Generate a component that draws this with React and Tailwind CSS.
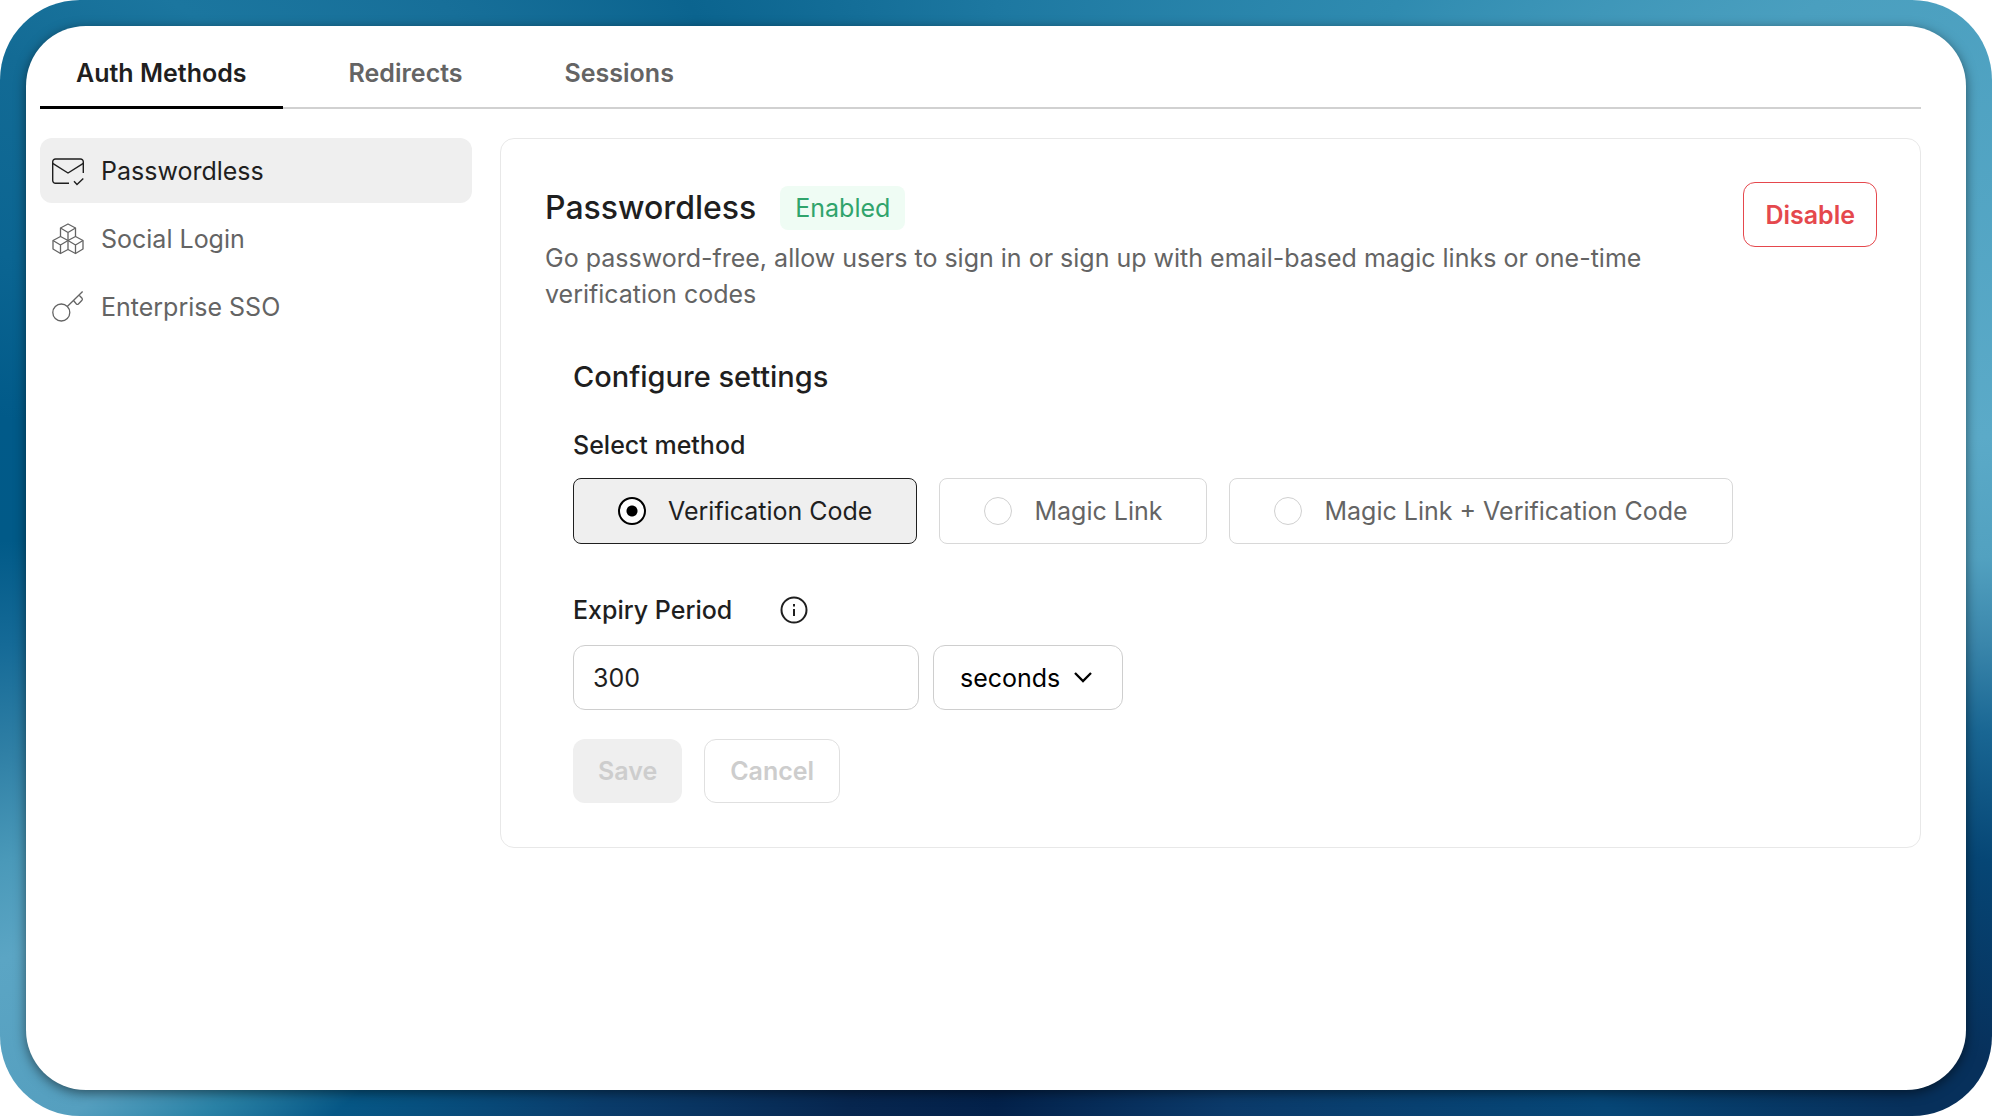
import { useState } from 'react'

const TABS = ['Auth Methods', 'Redirects', 'Sessions']
const METHODS = ['Verification Code', 'Magic Link', 'Magic Link + Verification Code']

function MailCheckIcon() {
  return (
    <svg className="size-8 shrink-0" viewBox="0 0 32 32" fill="none" stroke="currentColor" strokeWidth="1.4">
      <path d="M17 28.3H3.5a2.8 2.8 0 0 1-2.8-2.8V6.8A2.8 2.8 0 0 1 3.5 4h25a2.8 2.8 0 0 1 2.8 2.8V18" />
      <path d="M.7 8.3L16 18l15.3-9.7M22 26.2l3 3.3 6.3-6" />
    </svg>
  )
}

function CubesIcon() {
  return (
    <svg className="size-8 shrink-0" viewBox="0 0 32 32" fill="none" stroke="currentColor" strokeWidth="1.3" strokeLinejoin="round">
      <path d="M16 1l7.5 4v8.5L16 17.5l-7.5-4V5z" />
      <path d="M8.5 5L16 9.5 23.5 5M16 9.5v8" />
      <path d="M8.5 13.5L1 17.5V26l7.5 4.5 7.5-4v-9" />
      <path d="M1 17.5L8.5 22l7.5-4.5M8.5 22v8.5" />
      <path d="M23.5 13.5l7.5 4V26l-7.5 4.5-7.5-4" />
      <path d="M16 17.5l7.5 4.5 7.5-4.5M23.5 22v8.5" />
    </svg>
  )
}

function KeyIcon() {
  return (
    <svg className="size-8 shrink-0" viewBox="0 0 32 32" fill="none" stroke="currentColor" strokeWidth="1.3">
      <circle cx="9.3" cy="21.5" r="8.5" />
      <path d="M15.3 15.5L30.6.5M27 4l3 3.2q.8 1 0 2L26.400 13q-1 .8-2 0l-2.900-3.500" />
    </svg>
  )
}

const NAV = [
  { label: 'Passwordless', Icon: MailCheckIcon },
  { label: 'Social Login', Icon: CubesIcon },
  { label: 'Enterprise SSO', Icon: KeyIcon },
]

export default function App() {
  const [tab, setTab] = useState('Auth Methods')
  const [section, setSection] = useState('Passwordless')
  const [method, setMethod] = useState('Verification Code')
  const [expiry, setExpiry] = useState('300')
  const [unit, setUnit] = useState('seconds')

  return (
    <div className="flex min-h-screen bg-white font-['Inter',sans-serif] text-[25px] leading-9 text-[#1f1f1f]">
      <div className="flex flex-1 rounded-[80px] bg-[conic-gradient(#1d78a1,#2f8bb0_36deg,#4a9fbf_56deg,#5baac8_83deg,#52a1c0_90deg,#3a86ab_95deg,#196693_100deg,#064675_107deg,#07305b_117deg,#07305b_121deg,#064676_132deg,#0b3a6a_157deg,#03214a_180deg,#07264f_195deg,#0a3c6b_216deg,#065786_230deg,#2a82a6_235deg,#559fbf_239deg,#5ba5c4_248deg,#4a99b9_253deg,#2f7fa5_259deg,#156a97_265deg,#015a88_271deg,#015a89_278deg,#0b6592_287deg,#136b95_297deg,#1b769f_304deg,#176f99_315deg,#0b648f_331deg,#1d78a1)] p-[26px]">
        <div className="min-w-0 flex-1 rounded-[60px] bg-white pt-[29px] pr-[45px] pb-10 pl-[14px] shadow-[0_3px_12px_rgba(0,0,0,0.5)]">
          <nav className="flex gap-[30px] shadow-[inset_0_-2px_0_#d1d1d1]">
            {TABS.map((t) => (
              <button
                key={t}
                onClick={() => setTab(t)}
                className={`border-b-3 px-9 pb-[15px] font-semibold ${
                  tab === t ? 'border-black text-[#1f1f1f]' : 'border-transparent text-[#646464]'
                }`}
              >
                {t}
              </button>
            ))}
          </nav>

          <div className="mt-[29px] flex items-start gap-7">
            <aside className="flex w-[432px] shrink-0 flex-col gap-[3px]">
              {NAV.map(({ label, Icon }) => (
                <button
                  key={label}
                  onClick={() => setSection(label)}
                  className={`flex h-[65px] items-center gap-[17px] rounded-xl px-3 ${
                    section === label ? 'bg-[#efefef] text-[#1f1f1f]' : 'text-[#646464]'
                  }`}
                >
                  <Icon />
                  {label}
                </button>
              ))}
            </aside>

            <main className="min-w-0 flex-1 rounded-[14px] border border-[#e8e8e8] pt-[43px] pr-[43px] pb-11 pl-11">
              <div className="flex items-start justify-between gap-20">
                <div>
                  <div className="flex items-center gap-6 pt-1">
                    <h1 className="text-[32px] font-medium">Passwordless</h1>
                    <span className="rounded-lg bg-[#effcf4] px-[15px] py-1 text-[#30a46c]">Enabled</span>
                  </div>
                  <p className="mt-2.5 text-[#646464]">
                    Go password-free, allow users to sign in or sign up with email-based magic links or one-time verification codes
                  </p>
                </div>
                <button className="h-[65px] shrink-0 rounded-xl border border-[#e5484d] px-[21px] font-semibold text-[#e5484d]">
                  Disable
                </button>
              </div>

              <div className="mt-[47px] px-7">
                <h2 className="text-[29px] font-medium">Configure settings</h2>

                <fieldset className="mt-8">
                  <legend className="font-medium">Select method</legend>
                  <div className="mt-[15px] flex flex-wrap gap-[22px]">
                    {METHODS.map((m) => (
                      <label
                        key={m}
                        className={`flex h-[66px] items-center gap-[22px] rounded-lg border px-11 ${
                          method === m ? 'border-[#1f1f1f] bg-[#efefef]' : 'border-[#d8d8d8] text-[#646464]'
                        }`}
                      >
                        <input
                          type="radio"
                          name="method"
                          checked={method === m}
                          onChange={() => setMethod(m)}
                          className="size-7 appearance-none rounded-full border border-[#d0d0d0] bg-white checked:border-2 checked:border-black checked:bg-[radial-gradient(circle,#000_5px,#fff_6px)]"
                        />
                        {m}
                      </label>
                    ))}
                  </div>
                </fieldset>

                <div className="mt-12 flex items-center gap-12">
                  <label htmlFor="expiry" className="font-medium">Expiry Period</label>
                  <svg className="size-7" viewBox="0 0 28 28" fill="none" stroke="currentColor" strokeWidth="2">
                    <circle cx="14" cy="14" r="12.5" />
                    <path d="M14 13v7M14 8v2.5" />
                  </svg>
                </div>
                <div className="mt-[17px] flex gap-[14px]">
                  <input
                    id="expiry"
                    value={expiry}
                    onChange={(e) => setExpiry(e.target.value)}
                    className="h-[65px] w-[346px] rounded-xl border border-[#cecece] px-[19px]"
                  />
                  <div className="relative">
                    <select
                      aria-label="Expiry unit"
                      value={unit}
                      onChange={(e) => setUnit(e.target.value)}
                      className="h-[65px] w-[190px] appearance-none rounded-xl border border-[#cecece] px-[26px] text-black"
                    >
                      <option>seconds</option>
                      <option>minutes</option>
                      <option>hours</option>
                    </select>
                    <svg className="pointer-events-none absolute top-[22px] right-[30px] size-5 text-black" viewBox="0 0 20 20" fill="none" stroke="currentColor" strokeWidth="2.3">
                      <path d="M2 6l8 8 8-8" />
                    </svg>
                  </div>
                </div>

                <div className="mt-[29px] flex gap-[22px]">
                  <button disabled className="h-16 rounded-xl bg-[#efefef] px-[25px] font-semibold text-[#cdcdcd]">Save</button>
                  <button disabled className="h-16 rounded-xl border border-[#e0e0e0] px-[25px] font-semibold text-[#cdcdcd]">Cancel</button>
                </div>
              </div>
            </main>
          </div>
        </div>
      </div>
    </div>
  )
}
